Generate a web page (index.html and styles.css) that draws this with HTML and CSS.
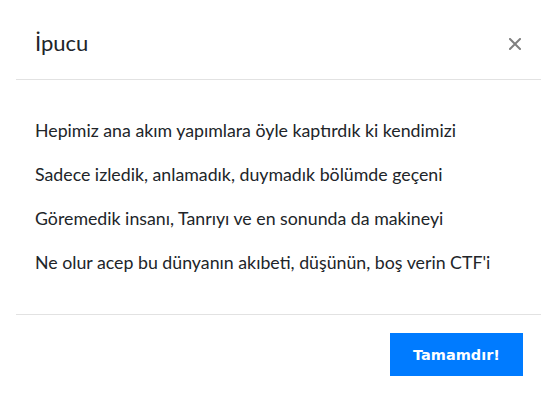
FILE: index.html
```html
<!DOCTYPE html>
<html lang="tr">
<head>
<meta charset="utf-8">
<link rel="stylesheet" href="styles.css">
</head>
<body>
<div class="modal">
  <div class="modal-header">
    <h2 class="modal-title">İpucu</h2>
    <button class="close" aria-label="Kapat">
      <svg width="12" height="12" viewBox="0 0 12 12"><path d="M1 1L11 11M11 1L1 11" stroke="#808080" stroke-width="2" stroke-linecap="square"/></svg>
    </button>
  </div>
  <div class="modal-body">
    <p>Hepimiz ana akım yapımlara öyle kaptırdık ki kendimizi</p>
    <p>Sadece izledik, anlamadık, duymadık bölümde geçeni</p>
    <p>Göremedik insanı, Tanrıyı ve en sonunda da makineyi</p>
    <p>Ne olur acep bu dünyanın akıbeti, düşünün, boş verin CTF'i</p>
  </div>
  <div class="modal-footer">
    <button class="btn">Tamamdır!</button>
  </div>
</div>
</body>
</html>
```
FILE: styles.css
```css
html, body {
  margin: 0;
  padding: 0;
  background: #fff;
}
body {
  font-family: Lato, "Noto Sans", sans-serif;
  color: #212529;
}
.modal {
  margin: 0 9px 0 16px;
}
.modal-header {
  height: 79px;
  border-bottom: 1px solid #e2e2e2;
  display: flex;
  align-items: center;
  justify-content: space-between;
  padding: 0 20px 0 19px;
}
.modal-title {
  margin: 0;
  font-weight: 400;
  font-size: 22px;
  line-height: 28px;
  padding-top: 6px;
}
.close {
  border: 0;
  background: none;
  padding: 0;
  width: 12px;
  height: 12px;
  display: flex;
  margin-top: 8px;
}
.modal-body {
  padding: 38px 19px 20px;
  border-bottom: 1px solid #e2e2e2;
}
.modal-body p {
  margin: 0 0 20px;
  font-size: 17.75px;
  line-height: 24px;
}
.modal-footer {
  display: flex;
  justify-content: flex-end;
  padding: 18px 18px 0;
}
.btn {
  background: #007bff;
  color: #fff;
  border: 0;
  width: 133px;
  height: 43px;
  font-family: "DejaVu Sans", sans-serif;
  font-weight: 700;
  font-size: 14.5px;
  padding: 0;
}
```
